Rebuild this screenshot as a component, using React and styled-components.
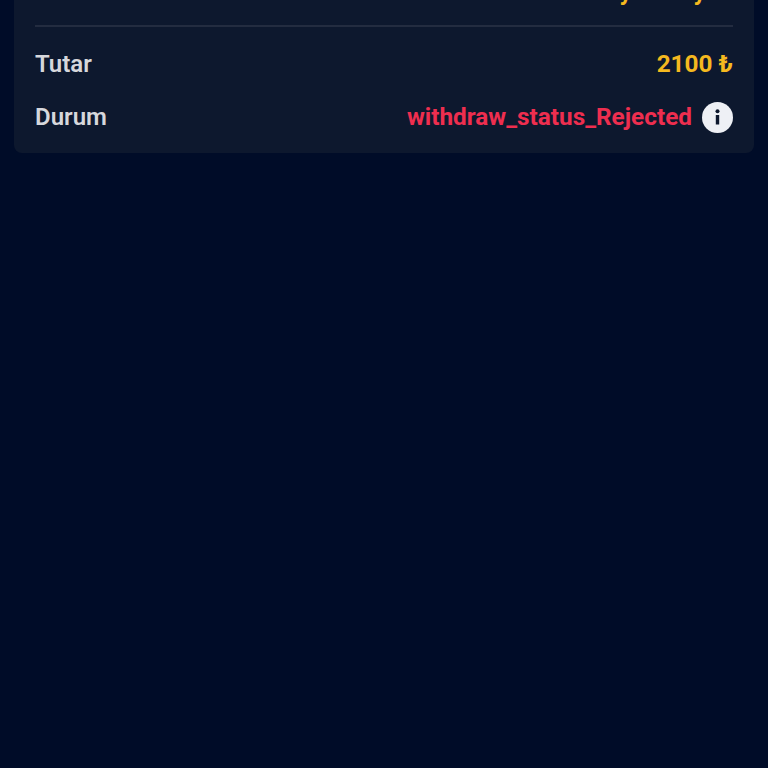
import styled, { createGlobalStyle } from "styled-components";

const GlobalStyle = createGlobalStyle`
  html, body {
    margin: 0;
    padding: 0;
    background: #000c28;
  }
`;

const Page = styled.div`
  height: 768px;
  overflow: hidden;
  padding: 0 14px;
  box-sizing: border-box;
  font-family: Roboto, "Noto Sans", sans-serif;
`;

// the list is scrolled, so the top of the card sits above the fold
const Card = styled.div`
  margin-top: -40px;
  padding: 0 21px 10px;
  background: #0d182e;
  border-radius: 8px;
`;

const Row = styled.div`
  display: flex;
  justify-content: space-between;
  align-items: center;
  height: 53px;
`;

const TopRow = styled(Row)`
  height: 67px;
  margin-bottom: 10px;
  padding-bottom: 3px;
  border-bottom: 2px solid #232c40;
  box-sizing: border-box;
`;

const Label = styled.span`
  font-size: 24px;
  font-weight: 600;
  color: #d6d7dc;
`;

const Value = styled.span`
  font-size: 24.35px;
  font-weight: 700;
  color: ${(p) => (p.$danger ? "#ee2e4f" : "#f5b91f")};
`;

const StatusCell = styled.div`
  display: flex;
  align-items: center;
  gap: 10px;
`;

const InfoButton = styled.button`
  width: 31px;
  height: 31px;
  margin-top: 2px;
  padding: 0;
  border: 0;
  border-radius: 50%;
  background: #eef0f5;
  display: flex;
  align-items: center;
  justify-content: center;
`;

function InfoIcon() {
  return (
    <svg width="31" height="31" viewBox="0 0 31 31">
      <circle cx="15.5" cy="9.2" r="2" fill="#0d182e" />
      <rect x="13.8" y="13" width="3.4" height="9.5" fill="#0d182e" />
    </svg>
  );
}

export default function App() {
  return (
    <Page>
      <GlobalStyle />
      <Card>
        <TopRow>
          <Label>Yöntem</Label>
          <Value>Payfix Payfix</Value>
        </TopRow>
        <Row>
          <Label>Tutar</Label>
          <Value>2100 ₺</Value>
        </Row>
        <Row>
          <Label>Durum</Label>
          <StatusCell>
            <Value $danger>withdraw_status_Rejected</Value>
            <InfoButton>
              <InfoIcon />
            </InfoButton>
          </StatusCell>
        </Row>
      </Card>
    </Page>
  );
}
